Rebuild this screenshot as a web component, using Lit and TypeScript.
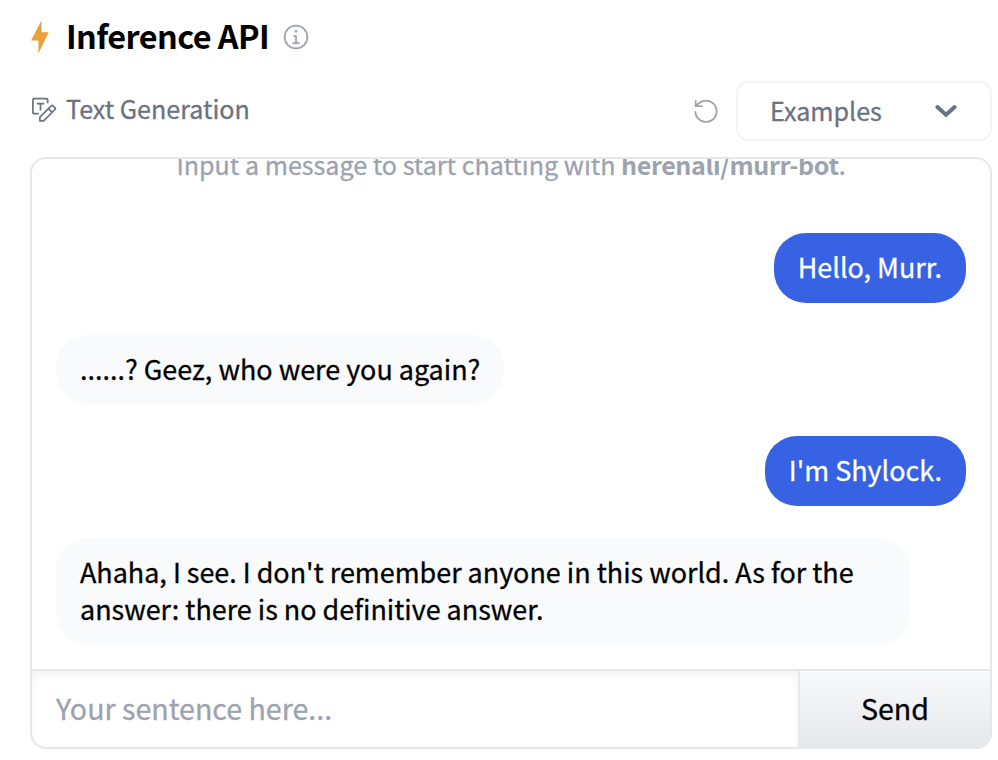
import { LitElement, html, css } from "lit";
import { customElement, state } from "lit/decorators.js";
import { classMap } from "lit/directives/class-map.js";

interface Message {
  text: string;
  mine: boolean;
}

@customElement("chat-message")
export class ChatMessage extends LitElement {
  static properties = { text: {}, mine: { type: Boolean } };
  declare text: string;
  declare mine: boolean;

  static styles = css`
    :host { display: flex; flex: none; }
    .bubble {
      box-sizing: border-box;
      padding: 15px 24px 17px;
      border-radius: 32px;
      max-width: 854px;
      background: #f9fafb;
      color: #000;
      font-size: 26.93px;
    }
    .mine { margin-left: auto; background: #3662e3; color: #fff; }
  `;

  render() {
    return html`<div class=${classMap({ bubble: true, mine: this.mine })}>${this.text}</div>`;
  }
}

@customElement("app-root")
export class AppRoot extends LitElement {
  @state() private messages: Message[] = [
    { text: "Hello, Murr.", mine: true },
    { text: "......? Geez, who were you again?", mine: false },
    { text: "I'm Shylock.", mine: true },
    { text: "Ahaha, I see. I don't remember anyone in this world. As for the answer: there is no definitive answer.", mine: false },
  ];

  static styles = css`
    :host {
      display: flex;
      flex-direction: column;
      box-sizing: border-box;
      width: 998px;
      height: 760px;
      padding: 13px 6px 11px 30px;
      overflow: hidden;
      background: #fff;
      color: #000;
      font: 400 28.6px/37.5px "Noto Sans CJK SC", "Open Sans", sans-serif;
      -webkit-text-stroke: 0.3px currentColor;
    }
    svg { display: block; flex: none; }
    .header { display: flex; align-items: center; height: 48px; }
    .bolt { width: 20px; height: 34px; margin-right: 16px; color: #e8a23d; }
    .title { margin: 0; padding-bottom: 4px; font-size: 32.4px; font-weight: 700; letter-spacing: -0.58px; white-space: nowrap; -webkit-text-stroke: 0; }
    .info { width: 28px; height: 28px; margin-left: 13px; color: #9ca3af; }
    .toolbar { display: flex; align-items: center; height: 60px; margin-top: 20px; color: #6b7280; }
    .task { width: 26px; height: 26px; margin: 0 9px 3px 1px; }
    .task-name { font-size: 25.1px; padding-bottom: 5px; white-space: nowrap; }
    .reset { width: 26px; height: 26px; margin: 0 17px 0 auto; color: #9ca3af; }
    .select {
      display: flex;
      align-items: center;
      justify-content: space-between;
      box-sizing: border-box;
      width: 256px;
      height: 60px;
      padding: 0 33px 0 32px;
      border: 2px solid #f3f4f6;
      border-radius: 12px;
      font-size: 25.1px;
    }
    .select-label { padding-bottom: 1px; }
    .chevron { width: 22px; height: 14px; }
    .chat {
      display: flex;
      flex-direction: column;
      flex: 1;
      box-sizing: border-box;
      min-height: 0;
      margin-top: 16px;
      border: 2px solid #e5e7eb;
      border-radius: 16px;
      overflow: hidden;
    }
    .log {
      display: flex;
      flex-direction: column;
      justify-content: flex-end;
      gap: 32px;
      flex: 1;
      min-height: 0;
      padding: 0 24px 24.5px;
      overflow: hidden;
    }
    .intro { flex: none; text-align: center; font-size: 25.1px; color: #9ca3af; white-space: nowrap; padding-bottom: 18px; }
    .intro b { letter-spacing: -0.4px; -webkit-text-stroke: 0; }
    .composer { display: flex; height: 76px; border-top: 2px solid #e5e7eb; }
    .field {
      flex: 1;
      display: flex;
      align-items: center;
      padding: 0 0 2px 24px;
      color: #9ca3af;
      box-shadow: inset 0 4px 8px rgba(0, 0, 0, 0.05);
    }
    .send {
      display: flex;
      align-items: center;
      justify-content: center;
      box-sizing: border-box;
      width: 192px;
      padding-bottom: 2px;
      border-left: 2px solid #e5e7eb;
      background: linear-gradient(#f9fafb, #e5e7eb);
    }
  `;

  render() {
    return html`
      <div class="header">
        <svg class="bolt" viewBox="0 0 20 34" fill="currentColor"><path d="M11.5 0.5 1 20.5h7.4L8.4 33.5 18.8 12.3h-7.3z" /></svg>
        <h1 class="title">Inference API</h1>
        <svg class="info" viewBox="0 0 32 32" fill="currentColor">
          <path d="M17 22v-8h-4v2h2v6h-3v2h8v-2z" />
          <path d="M16 8a1.5 1.5 0 1 0 1.5 1.5A1.5 1.5 0 0 0 16 8z" />
          <path d="M16 30a14 14 0 1 1 14-14 14 14 0 0 1-14 14zm0-26a12 12 0 1 0 12 12A12 12 0 0 0 16 4z" />
        </svg>
      </div>
      <div class="toolbar">
        <svg class="task" viewBox="0 0 26 26" fill="none" stroke="currentColor" stroke-width="1.7">
          <path d="M7.6 16.6H3.2Q1.9 16.6 1.9 15.3V3Q1.9 1.7 3.2 1.7H15.4Q16.7 1.7 16.7 3V6.2" />
          <path d="M5.8 6.6h7.4M9.5 6.6v7" />
          <path d="M8.9 23.9v-3.7L20.3 8.8q.8-.8 1.6 0l2.1 2.1q.8.8 0 1.6L12.6 23.9zM17.5 11.6l3.7 3.7" stroke-linejoin="round" />
        </svg>
        <span class="task-name">Text Generation</span>
        <svg class="reset" viewBox="0 0 26 26" fill="none" stroke="currentColor" stroke-width="1.7">
          <path d="M2.3 13.3A10.7 10.7 0 1 0 13 2.6C8.9 2.6 6 4.4 2.8 8.2M2.7 2.3V8.2H9.4" />
        </svg>
        <div class="select">
          <span class="select-label">Examples</span>
          <svg class="chevron" viewBox="0 0 22 14" fill="none" stroke="currentColor" stroke-width="4"><path d="m2.4 3 8.6 7.8L19.6 3" stroke-linecap="round" /></svg>
        </div>
      </div>
      <div class="chat">
        <div class="log">
          <div class="intro">Input a message to start chatting with <b>herenali/murr-bot</b>.</div>
          ${this.messages.map((m) => html`<chat-message .text=${m.text} .mine=${m.mine}></chat-message>`)}
        </div>
        <div class="composer">
          <div class="field">Your sentence here...</div>
          <div class="send">Send</div>
        </div>
      </div>
    `;
  }
}
